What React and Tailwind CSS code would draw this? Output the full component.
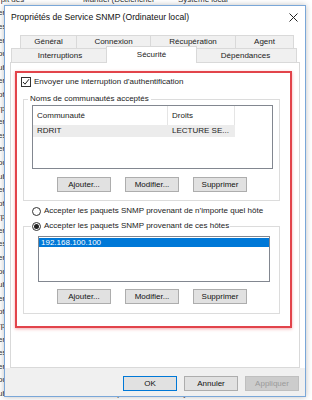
import React from 'react';

const font = { fontFamily: '"Liberation Sans", Arial, sans-serif' };

const Btn = ({ children, className = '' }) => (
  <div className={`w-[54px] h-[15px] flex items-center justify-center bg-[#e1e1e1] border border-[#adadad] text-[8px] text-[#111] ${className}`}>
    {children}
  </div>
);

const Radio = ({ checked }) => (
  <span className="w-[9px] h-[9px] rounded-full border border-[#333] bg-white flex items-center justify-center shrink-0">
    {checked && <span className="w-[5px] h-[5px] rounded-full bg-[#222]" />}
  </span>
);

const ButtonRow = ({ className = '' }) => (
  <div className={`flex gap-[14px] ml-[33px] ${className}`}>
    <Btn>Ajouter...</Btn>
    <Btn>Modifier...</Btn>
    <Btn>Supprimer</Btn>
  </div>
);

const bgRows = [
  ['rpit des', 'Manuel (Déclencher', 'Système local'],
  ['ermet', 'Manuel', 'Service local'],
  ['estion', 'Automatique', 'Système local'],
  ['ermet', 'Manuel', 'Système local'],
  ['ournit', 'Manuel', 'Service réseau'],
  ['ublie', 'Automatique', 'Système local'],
  ['ermet', 'Manuel', 'Service local'],
  ['ptimise', 'Automatique', 'Système local'],
];

export default function App() {
  return (
    <div className="relative w-[312px] h-[400px] overflow-hidden bg-white text-[#222]" style={font}>
      {/* services list behind the dialog */}
      <div className="flex flex-col -mt-[7px] text-[8px] text-[#333]">
        {Array.from({ length: 30 }).map((_, i) => {
          const r = bgRows[i % bgRows.length];
          return (
            <div key={i} className="flex h-[13.6px] items-center whitespace-nowrap">
              <span className="w-[85px] -ml-[2px]">{r[0]}</span>
              <span className="w-[95px]">{r[1]}</span>
              <span>{r[2]}</span>
            </div>
          );
        })}
      </div>

      {/* dialog window */}
      <div className="absolute left-[4px] top-[5px] w-[302px] h-[392px] border border-[#7aa7d8] bg-[#f0f0f0] flex flex-col shadow-[0_0_6px_rgba(0,0,0,0.25)]">
        {/* title bar */}
        <div className="h-[23px] bg-white flex items-center justify-between pl-[6px] pr-[7px]">
          <span className="text-[8.6px] text-[#111]">Propriétés de Service SNMP (Ordinateur local)</span>
          <svg width="9" height="9" viewBox="0 0 9 9">
            <path d="M0.5 0.5 L8.5 8.5 M8.5 0.5 L0.5 8.5" stroke="#222" strokeWidth="1" />
          </svg>
        </div>

        <div className="flex flex-col px-[5px] pt-[6px] bg-white flex-1">
          {/* tabs row 1 */}
          <div className="flex ml-[10px] h-[13px] text-[8px]">
            {[['Général', 'w-[57px]'], ['Connexion', 'w-[75px]'], ['Récupération', 'w-[86px]'], ['Agent', 'w-[59px]']].map(([t, w]) => (
              <div key={t} className={`${w} border-t border-l border-r border-[#d9d9d9] bg-[#f0f0f0] -mr-[1px] flex items-center justify-center`}>{t}</div>
            ))}
          </div>
          {/* tabs row 2 */}
          <div className="flex items-end ml-[1px] h-[16px] -mt-[2px] text-[8px] relative z-10">
            <div className="w-[97px] h-[14px] border-t border-l border-[#d9d9d9] bg-[#f0f0f0] flex items-center justify-center">Interruptions</div>
            <div className="w-[91px] -mx-[2px] h-[17px] -mb-[1px] border-t border-l border-r border-[#d9d9d9] bg-white flex items-start justify-center pt-[2px] relative z-10">Sécurité</div>
            <div className="w-[102px] h-[14px] border-t border-r border-[#d9d9d9] bg-[#f0f0f0] flex items-center justify-center">Dépendances</div>
          </div>

          {/* tab page */}
          <div className="h-[306px] border border-[#d9d9d9] bg-white pt-[8px] pl-[4px]">
            <div className="w-[277px] h-[257px] border-2 border-[#e2444b] shadow-[0_1px_3px_rgba(226,68,75,0.45)] flex flex-col text-[8px]">
              <div className="flex items-center gap-[3px] ml-[4px] mt-[4px] h-[10px]">
                <span className="w-[10px] h-[10px] border border-[#333] bg-white flex items-center justify-center">
                  <svg width="8" height="8" viewBox="0 0 8 8">
                    <path d="M1 4 L3 6.2 L7 1.2" stroke="#222" strokeWidth="1" fill="none" />
                  </svg>
                </span>
                <span>Envoyer une interruption d’authentification</span>
              </div>

              <fieldset className="ml-[6px] mt-[6px] w-[257px] border border-[#dcdcdc] pb-[8px]">
                <legend className="ml-[4px] px-[2px] leading-[12px]">Noms de communautés acceptés</legend>
                <div className="ml-[8px] w-[241px] h-[64px] border border-[#828790] bg-white">
                  <div className="flex h-[19px] items-center">
                    <span className="w-[135px] h-full pl-[4px] flex items-center border-r border-[#e5e5e5]">Communauté</span>
                    <span className="w-[67px] h-full pl-[4px] flex items-center border-r border-[#e5e5e5]">Droits</span>
                  </div>
                  <div className="flex w-[202px] h-[12px] items-center bg-[#ececec]">
                    <span className="w-[135px] pl-[4px]">RDRIT</span>
                    <span className="pl-[4px]">LECTURE SE...</span>
                  </div>
                </div>
                <ButtonRow className="mt-[8px]" />
              </fieldset>

              <div className="flex items-center gap-[3px] ml-[15px] mt-[5px] h-[10px]">
                <Radio />
                <span>Accepter les paquets SNMP provenant de n’importe quel hôte</span>
              </div>

              <fieldset className="ml-[6px] mt-[4px] w-[257px] border border-[#dcdcdc] pb-[9px]">
                <legend className="ml-[7px] px-[1px] leading-[12px]">
                  <span className="flex items-center gap-[3px]">
                    <Radio checked />
                    <span>Accepter les paquets SNMP provenant de ces hôtes</span>
                  </span>
                </legend>
                <div className="ml-[14px] mt-[4px] w-[232px] h-[46px] border border-[#828790] bg-white pt-[1px]">
                  <div className="h-[9px] bg-[#0078d7] text-white flex items-center pl-[2px]">192.168.100.100</div>
                </div>
                <ButtonRow className="mt-[7px]" />
              </fieldset>
            </div>
          </div>
        </div>

        {/* dialog buttons */}
        <div className="flex justify-end gap-[7px] pr-[6px] pt-[8px] pb-[5px] text-[8px]">
          <Btn className="!border-[#0078d7]">OK</Btn>
          <Btn>Annuler</Btn>
          <Btn className="!bg-[#cccccc] !border-[#bfbfbf] !text-[#9a9a9a]">Appliquer</Btn>
        </div>
      </div>
    </div>
  );
}
